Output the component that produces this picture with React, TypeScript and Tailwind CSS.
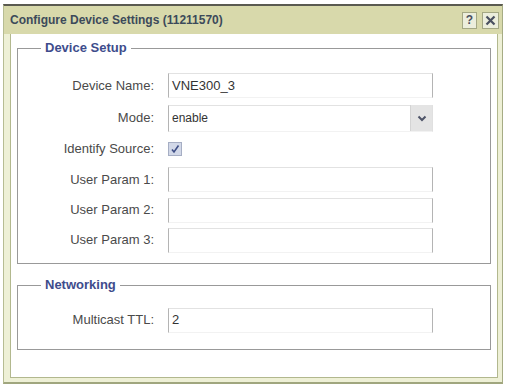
import React from 'react';

const font = { fontFamily: '"Liberation Sans", Arial, sans-serif' };

const Field = ({ label, h, children }: { label: string; h: string; children?: React.ReactNode }) => (
  <div className={`flex items-center ${h}`}>
    <div className="w-[136px] shrink-0 text-right text-[13px] text-[#4a4a4a]">{label}</div>
    <div className="ml-[14px] flex-1">{children}</div>
  </div>
);

const TextBox = ({ value }: { value?: string }) => (
  <div className="flex h-[25px] w-[265px] items-center border border-t-[#e2e2e2] border-b-[#f2f2f2] border-l-[#b4b4b4] border-r-[#b4b4b4] bg-white pl-[3px] text-[13px] text-[#333]">
    {value}
  </div>
);

export default function App() {
  return (
    <div className="h-[387px] w-[509px] bg-white pl-[3px] pt-[4px]" style={font}>
      <div className="flex h-[380px] w-[500px] flex-col border-t-2 border-l border-r border-b-2 border-t-[#5a5a50] border-l-[#b6bc92] border-r-[#a6ac84] border-b-[#a0a67e] bg-[#eef0d6]">
        {/* title bar */}
        <div className="flex h-[28px] items-center justify-between bg-[#d8d9ab] pl-[6px] pr-[3px]">
          <span className="text-[12px] font-bold text-[#3c4a5a]">Configure Device Settings (11211570)</span>
          <div className="flex gap-[5px]">
            <div className="flex h-[17px] w-[15px] items-center justify-center border border-[#a4a884] bg-[#eceedc] text-[12px] font-bold text-[#4a5060]">?</div>
            <div className="flex h-[17px] w-[17px] items-center justify-center border border-[#a4a884] bg-[#eceedc]">
              <svg width="11" height="11" viewBox="0 0 11 11">
                <path d="M1.5 1.5 L9.5 9.5 M9.5 1.5 L1.5 9.5" stroke="#4a5060" strokeWidth="2.2" />
              </svg>
            </div>
          </div>
        </div>
        {/* body */}
        <div className="flex-1 pl-[6px] pr-[4px] pb-[4px]">
          <div className="h-full border border-[#b2b88e] border-t-0 bg-white px-[6px] pt-[7px]">
            <fieldset className="h-[223px] border border-[#999] px-0">
              <legend className="ml-[23px] px-[4px] text-[13px] font-bold leading-[14px] text-[#3e4c8c]">Device Setup</legend>
              <div className="pt-[14px]">
                <Field label="Device Name:" h="h-[33px]">
                  <TextBox value="VNE300_3" />
                </Field>
                <Field label="Mode:" h="h-[32px]">
                  <div className="flex h-[27px] w-[265px] items-center justify-between border border-t-[#e2e2e2] border-b-[#f2f2f2] border-l-[#b4b4b4] border-r-[#e0e0e0] bg-white pl-[3px] text-[12px] text-[#333]">
                    <span>enable</span>
                    <div className="flex h-[26px] w-[22px] items-center justify-center border-l border-[#d4d4d4] bg-[#e4e4e4]">
                      <svg width="10" height="7" viewBox="0 0 10 7">
                        <path d="M1.5 1.5 L5 5 L8.5 1.5" stroke="#4e5468" strokeWidth="2" fill="none" />
                      </svg>
                    </div>
                  </div>
                </Field>
                <Field label="Identify Source:" h="h-[30px]">
                  <div className="flex h-[14px] w-[14px] items-center justify-center border border-[#a6aec4] bg-[#d2d8e8]">
                    <svg width="10" height="10" viewBox="0 0 10 10">
                      <path d="M2 5.5 L4 8 L8.5 1.5" stroke="#3e4e86" strokeWidth="1.6" fill="none" />
                    </svg>
                  </div>
                </Field>
                <Field label="User Param 1:" h="h-[31px]">
                  <TextBox />
                </Field>
                <Field label="User Param 2:" h="h-[30px]">
                  <TextBox />
                </Field>
                <Field label="User Param 3:" h="h-[30px]">
                  <TextBox />
                </Field>
              </div>
            </fieldset>
            <fieldset className="mt-[14px] h-[72px] border border-[#999] px-0">
              <legend className="ml-[23px] px-[4px] text-[13px] font-bold leading-[14px] text-[#3e4c8c]">Networking</legend>
              <div className="pt-[14px]">
                <Field label="Multicast TTL:" h="h-[28px]">
                  <TextBox value="2" />
                </Field>
              </div>
            </fieldset>
          </div>
        </div>
      </div>
    </div>
  );
}
